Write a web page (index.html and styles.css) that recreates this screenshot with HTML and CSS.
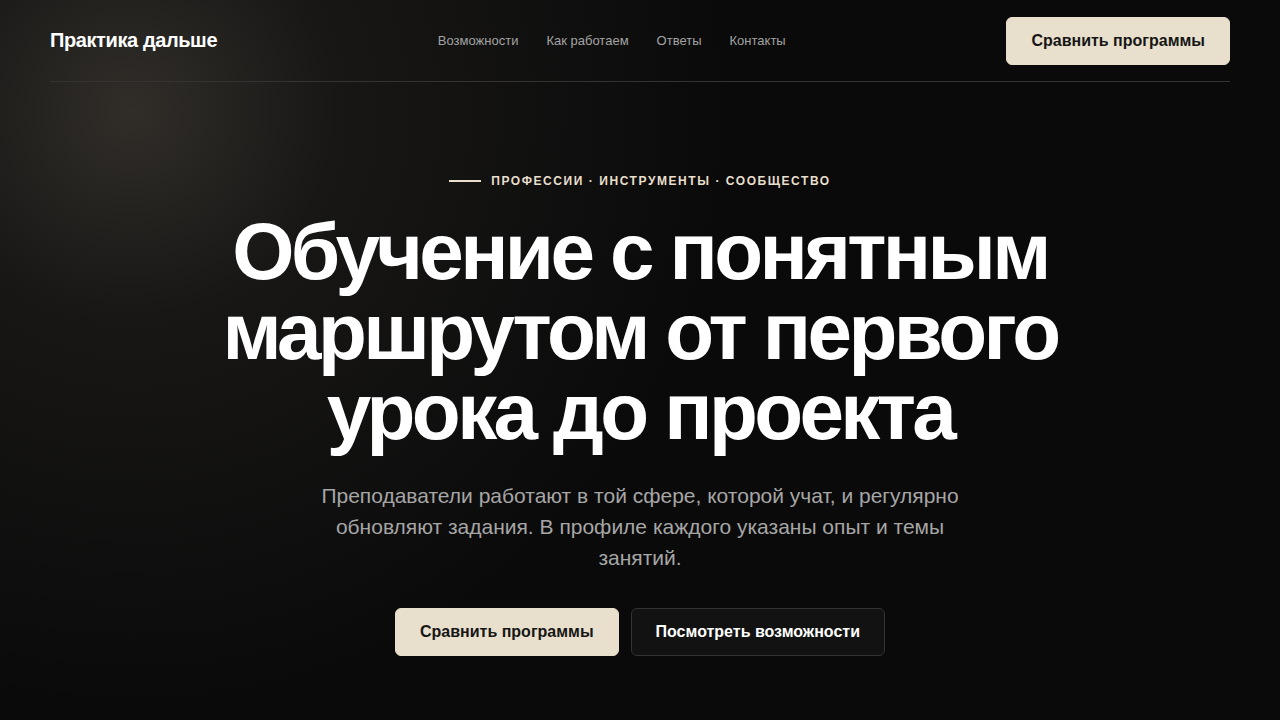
FILE: index.html
```html
<!DOCTYPE html>
<html lang="ru">
<head>
<meta charset="utf-8">
<title>Практика дальше</title>
<link rel="stylesheet" href="styles.css">
</head>
<body>
<div class="page">
  <header class="header">
    <div class="logo">Практика дальше</div>
    <nav class="nav">
      <a href="#">Возможности</a>
      <a href="#">Как работаем</a>
      <a href="#">Ответы</a>
      <a href="#">Контакты</a>
    </nav>
    <a class="btn btn-primary" href="#">Сравнить программы</a>
  </header>
  <main class="hero">
    <div class="eyebrow"><span class="eyebrow-line"></span>Профессии · Инструменты · Сообщество</div>
    <h1 class="title">Обучение с понятным маршрутом от первого урока до проекта</h1>
    <p class="lead">Преподаватели работают в той сфере, которой учат, и регулярно обновляют задания. В профиле каждого указаны опыт и темы занятий.</p>
    <div class="actions">
      <a class="btn btn-primary" href="#">Сравнить программы</a>
      <a class="btn btn-secondary" href="#">Посмотреть возможности</a>
    </div>
  </main>
</div>
</body>
</html>
```
FILE: styles.css
```css
* { box-sizing: border-box; }
html, body { margin: 0; padding: 0; }
body {
  font-family: "Liberation Sans", Arial, sans-serif;
  background: #0a0a0a;
  color: #fff;
  min-height: 720px;
}
.page {
  min-height: 720px;
  padding: 0 50px;
  background:
    radial-gradient(circle 600px at 130px 110px, rgba(62, 58, 52, 0.75) 0%, rgba(40, 38, 35, 0.45) 35%, rgba(10, 10, 10, 0) 100%),
    #0a0a0a;
}
a { text-decoration: none; }
.header {
  display: flex;
  justify-content: space-between;
  align-items: center;
  padding: 17px 0 16px;
  border-bottom: 1px solid #343332;
}
.logo {
  font-weight: 700;
  font-size: 20px;
  line-height: 22px;
  letter-spacing: -0.02em;
  color: #fff;
  margin-top: -2px;
}
.nav {
  display: flex;
  gap: 28px;
  margin-top: -2px;
}
.nav a {
  color: #a3a3a3;
  font-size: 13px;
}
.btn {
  display: inline-flex;
  align-items: center;
  justify-content: center;
  height: 48px;
  padding: 0 24px;
  border-radius: 6px;
  font-weight: 700;
  font-size: 16px;
  border: 1px solid transparent;
}
.btn-primary {
  background: #e8dfcc;
  border-color: #e8dfcc;
  color: #161616;
}
.btn-secondary {
  background: #121212;
  color: #fff;
  border-color: #333;
}
.hero {
  display: flex;
  flex-direction: column;
  align-items: center;
  text-align: center;
  padding-top: 92px;
}
.eyebrow {
  display: flex;
  align-items: center;
  gap: 10px;
  font-size: 12px;
  font-weight: 700;
  letter-spacing: 0.13em;
  text-transform: uppercase;
  color: #e8dfcc;
}
.eyebrow-line {
  width: 32px;
  height: 2px;
  background: #e8dfcc;
}
.title {
  margin: 24px 0 0;
  max-width: 900px;
  font-size: 80px;
  line-height: 80px;
  font-weight: 700;
  letter-spacing: -0.045em;
  color: #fff;
}
.lead {
  margin: 28px 0 0;
  max-width: 680px;
  font-size: 21px;
  line-height: 31px;
  color: #a6a6a6;
}
.actions {
  display: flex;
  gap: 12px;
  margin-top: 35px;
}
```
